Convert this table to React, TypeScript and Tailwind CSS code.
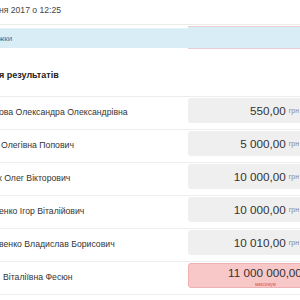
import React from 'react';

interface Bid {
  name: string;
  shift: string;
  amount: string;
  over?: boolean;
}

const bids: Bid[] = [
  { name: 'ова Олександра Олександрівна', shift: '-ml-[1px]', amount: '550,00' },
  { name: 'Олегівна Попович', shift: 'ml-[1px]', amount: '5 000,00' },
  { name: 'к Олег Вікторович', shift: '-ml-[2px]', amount: '10 000,00' },
  { name: 'енко Ігор Віталійович', shift: '-ml-[1px]', amount: '10 000,00' },
  { name: 'венко Владислав Борисович', shift: '-ml-[1px]', amount: '10 010,00' },
  { name: 'Віталіївна Фесюн', shift: 'ml-[3px]', amount: '11 000 000,00', over: true },
];

export default function App() {
  return (
    <div className="w-[300px] h-[300px] overflow-hidden bg-white text-[#333] font-['Liberation_Sans',Arial,sans-serif]">
      {/* date line */}
      <div className="h-[25px] border-b border-[#ececec] flex items-center pb-[4px]">
        <span className="-ml-[1px] text-[8.6px] text-[#444] whitespace-nowrap">ня 2017 о 12:25</span>
      </div>

      {/* info strip */}
      <div className="flex h-[24px]">
        <div className="flex-1 mt-[3px] mb-[1px] bg-[#d9edf7] border-t border-[#e6f3f9] flex items-center">
          <span className="-ml-[1px] text-[8px] text-[#3f7599] whitespace-nowrap">жки</span>
        </div>
        <div className="w-[112px] mt-[1px] bg-[#d9edf7] border-y border-[#e9cfd3]" />
      </div>

      {/* heading */}
      <div className="h-[47px] flex items-center pt-[7px]">
        <h2 className="-ml-[1px] text-[9px] font-bold text-[#222] whitespace-nowrap">я результатів</h2>
      </div>

      <div className="border-t border-[#ececec]">
        {bids.map((b, i) => (
          <div key={i} className="flex h-[33px] pt-[1px] pb-[6px] border-b border-[#eeeeee]">
            <div className="flex-1 flex items-center pt-[4px] overflow-hidden">
              <span className={`${b.shift} text-[8.7px] text-[#333] whitespace-nowrap`}>{b.name}</span>
            </div>
            {b.over ? (
              <div className="w-[130px] shrink-0 -mr-[18px] h-[25px] rounded-[3px] bg-[#f8c8c8] border border-[#eeb0b0] flex flex-col items-start pl-[39px] pt-[1px]">
                <div className="whitespace-nowrap leading-[14px]">
                  <span className="text-[11.7px] text-[#333]">{b.amount}</span>
                  <span className="ml-[3px] text-[7px] text-[#888]">грн</span>
                </div>
                <span className="ml-[27px] text-[4.5px] leading-[6px] text-[#d9534f] whitespace-nowrap">максимум</span>
              </div>
            ) : (
              <div className="w-[130px] shrink-0 -mr-[18px] h-[25px] rounded-[3px] bg-[#efefef] flex items-center justify-end pr-[19px] whitespace-nowrap">
                <span className="text-[11.7px] text-[#333]">{b.amount}</span>
                <span className="ml-[3px] mt-[2px] text-[7px] text-[#888]">грн</span>
              </div>
            )}
          </div>
        ))}
      </div>
    </div>
  );
}
